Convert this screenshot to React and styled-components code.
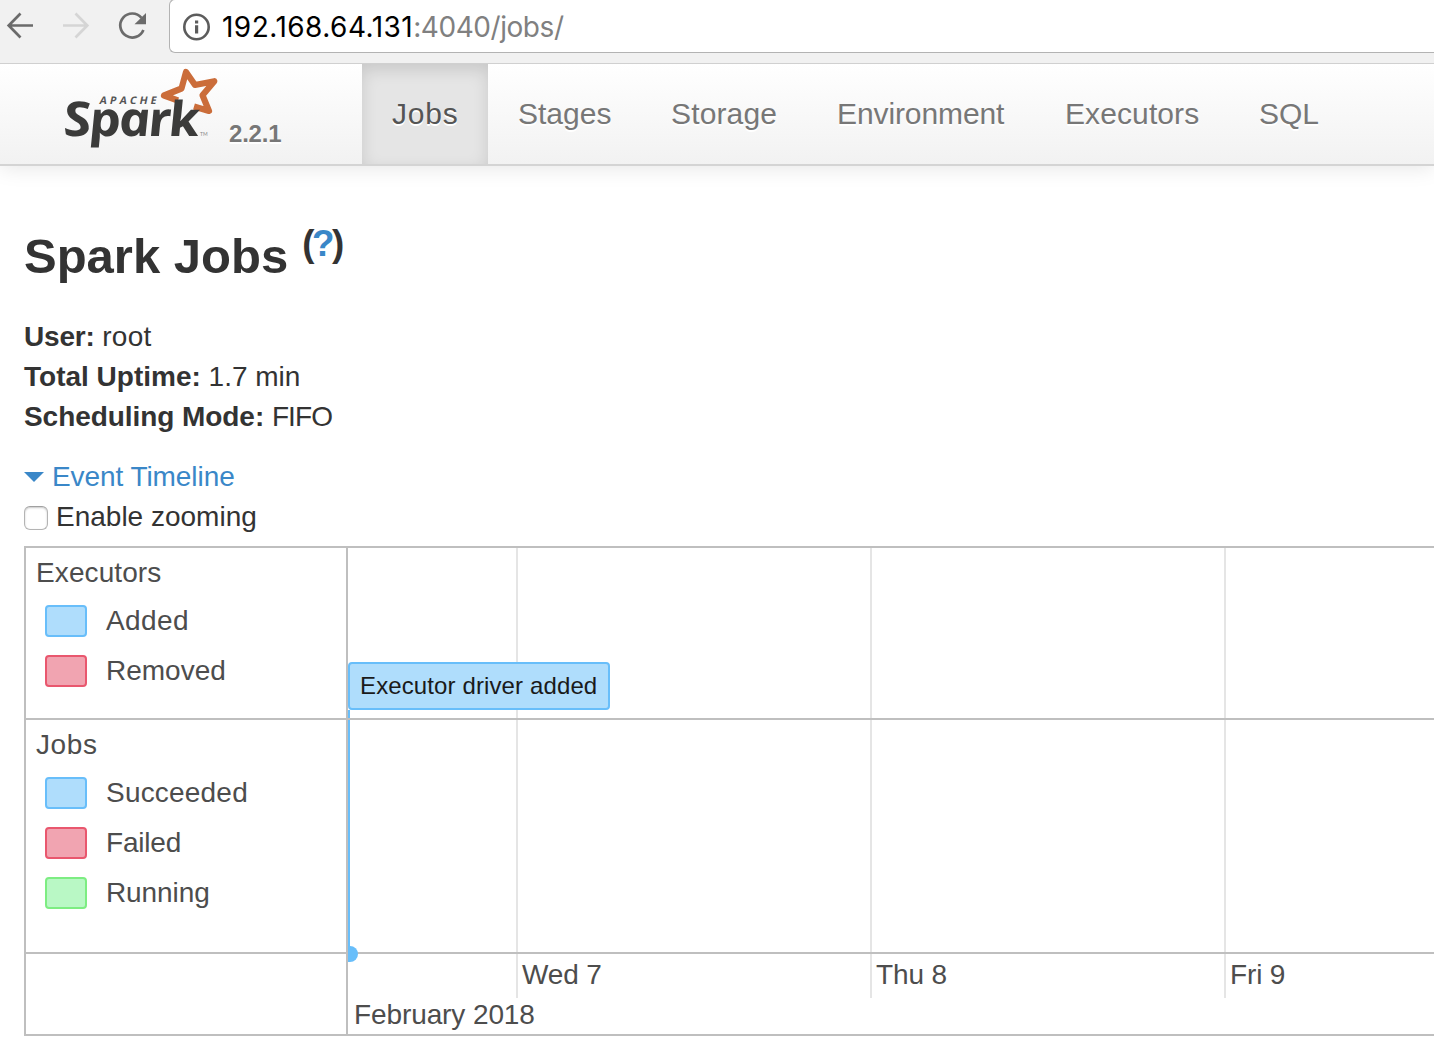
import React from "react";
import styled, { createGlobalStyle } from "styled-components";

const GlobalStyle = createGlobalStyle`
  *, *::before, *::after { box-sizing: border-box; }
  html, body { margin: 0; padding: 0; background: #fff; overflow: hidden; }
  body {
    font-family: "Liberation Sans", Arial, sans-serif;
    font-size: 28px;
    line-height: 40px;
    color: #333;
  }
`;

const Page = styled.div`
  width: 1434px;
  height: 1064px;
  overflow: hidden;
`;

const Toolbar = styled.header`
  position: relative;
  z-index: 1;
  display: flex;
  height: 64px;
  background: #f1f1f1;
  border-bottom: 1px solid #d0d0d0;
`;

const ToolbarButtons = styled.div`
  display: flex;
  width: 169px;
  height: 53px;
  flex: none;
`;

const AddressBar = styled.div`
  display: flex;
  align-items: center;
  flex: 1;
  height: 54px;
  margin-top: -1px;
  padding: 2px 0 0 12px;
  background: #fff;
  border: 1px solid #b3b3b3;
  border-right: 0;
  border-radius: 6px 0 0 6px;
  white-space: pre;
`;

const Url = styled.span`
  margin-left: 11px;
  font-family: Inter, "Liberation Sans", sans-serif;
  font-size: 28px;
  letter-spacing: ${(p) => p.$spacing || 0}px;
  color: #000;
`;

const UrlPath = styled.span`
  color: #808080;
  letter-spacing: ${(p) => p.$spacing || 0}px;
`;

const Navbar = styled.nav`
  display: flex;
  height: 102px;
  background: linear-gradient(to bottom, #ffffff, #f2f2f2);
  border-bottom: 2px solid #d4d4d4;
  box-shadow: 0 2px 20px rgba(0, 0, 0, 0.1);
`;

const Brand = styled.div`
  display: flex;
  width: 362px;
  flex: none;
`;

const Version = styled.span`
  padding-top: 50px;
  font-size: 24px;
  font-weight: bold;
  letter-spacing: ${(p) => p.$spacing || 0}px;
  color: #777;
  text-shadow: 0 2px 0 #fff;
`;

const NavItem = styled.a`
  flex: none;
  width: ${(p) => p.$width}px;
  height: 100px;
  padding: 30px 0 0 30px;
  font-size: 30px;
  letter-spacing: ${(p) => p.$spacing || 0}px;
  white-space: nowrap;
  color: ${(p) => (p.$active ? "#555" : "#777")};
  text-shadow: 0 2px 0 #fff;
  background: ${(p) => (p.$active ? "#e5e5e5" : "transparent")};
  box-shadow: ${(p) => (p.$active ? "inset 0 6px 16px rgba(0,0,0,0.125)" : "none")};
`;

const Content = styled.main`
  padding: 50px 0 0 24px;
`;

const Title = styled.h3`
  display: flex;
  margin: 0;
  height: 80px;
  font-size: 49px;
  line-height: 81px;
  white-space: nowrap;
`;

const HelpMark = styled.span`
  margin-left: 14px;
  font-size: 36.75px;
  line-height: 55px;
  letter-spacing: -2.5px;
`;

const Accent = styled.span`
  color: #3a87c8;
`;

const Summary = styled.ul`
  list-style: none;
  margin: 20px 0 20px;
  padding: 0;
`;

const SummaryRow = styled.li`
  height: 40px;
  padding-top: 1px;
  white-space: pre;
`;

const Text = styled.span`
  letter-spacing: ${(p) => p.$spacing || 0}px;
  font-weight: ${(p) => (p.$bold ? "bold" : "normal")};
`;

const TimelineToggle = styled.div`
  display: flex;
  align-items: center;
  gap: 8px;
  height: 40px;
  padding-top: 2px;
  color: #3a87c8;
`;

const Caret = styled.i`
  width: 0;
  height: 0;
  border: 10px solid transparent;
  border-top-color: #3a87c8;
  border-bottom: 0;
`;

const ZoomOption = styled.label`
  display: flex;
  align-items: center;
  gap: 8px;
  height: 40px;
  padding-top: 2px;
`;

const Checkbox = styled.span`
  width: 24px;
  height: 24px;
  margin-top: 2px;
  border: 1px solid #b4b4b4;
  border-top-color: #a0a0a0;
  border-radius: 6px;
  background: #fff;
  box-shadow: inset 0 1px 2px rgba(0, 0, 0, 0.22);
`;

const Timeline = styled.section`
  display: grid;
  grid-template-columns: 322px 1fr;
  grid-template-rows: 172px 234px 80px;
  margin-top: 10px;
  height: 490px;
  border: 2px solid #bfbfbf;
  border-right: 0;
  color: #4d4d4d;
`;

const GroupLabel = styled.div`
  padding: 5px 0 0 10px;
  border-right: 2px solid #bfbfbf;
  border-bottom: ${(p) => (p.$last ? "0" : "2px solid #bfbfbf")};
`;

const Legend = styled.div`
  display: flex;
  flex-direction: column;
  gap: 18px;
  padding: 12px 0 0 9px;
`;

const LegendRow = styled.div`
  display: flex;
  align-items: center;
  gap: 19px;
  height: 32px;
`;

const Swatch = styled.i`
  width: 42px;
  height: 32px;
  border-radius: 4px;
  border: 2px solid ${(p) => p.$edge};
  background: ${(p) => p.$fill};
`;

const Lane = styled.div`
  position: relative;
  display: grid;
  grid-template-columns: 168px 354px 354px 1fr;
  border-bottom: ${(p) => (p.$last ? "0" : "2px solid #bfbfbf")};
`;

const DayColumn = styled.div`
  height: ${(p) => (p.$axis ? "44px" : "100%")};
  padding-top: ${(p) => (p.$axis ? 1 : 0)}px;
  padding-left: ${(p) => (p.$first ? 0 : 4)}px;
  border-left: ${(p) => (p.$first ? "0" : "2px solid #e5e5e5")};
  letter-spacing: -0.15px;
  white-space: nowrap;
`;

const Month = styled.div`
  position: absolute;
  left: 6px;
  top: 41px;
  letter-spacing: -0.1px;
`;

const EventBox = styled.div`
  position: absolute;
  left: 0;
  top: 114px;
  width: 262px;
  height: 48px;
  padding: 2px 0 0 10px;
  border: 2px solid #68befa;
  border-radius: 4px;
  background: #afddfc;
  color: #1a1a1a;
  font-size: 24px;
  letter-spacing: ${(p) => p.$spacing || 0}px;
  white-space: nowrap;
`;

const EventStem = styled.div`
  position: absolute;
  left: 0;
  top: ${(p) => p.$top}px;
  width: 2px;
  height: ${(p) => p.$height}px;
  background: #68befa;
`;

const EventDot = styled.div`
  position: absolute;
  left: 0;
  bottom: -10px;
  width: 10px;
  height: 16px;
  border-radius: 0 8px 8px 0;
  background: #68befa;
  z-index: 1;
`;

const BLUE = { fill: "#afddfc", edge: "#68befa" };
const RED = { fill: "#f1a4b1", edge: "#e9576e" };
const GREEN = { fill: "#b9f8c5", edge: "#7ded82" };

function NavigationIcons() {
  return (
    <svg width="169" height="53" fill="none" strokeWidth="2.7">
      <path d="M33 25.5H9M20.5 13.5L8.7 25.5L20.5 37.5" stroke="#6b6b6b" />
      <path d="M63 25.5H87M75.5 13.5L87.3 25.5L75.5 37.5" stroke="#d5d5d5" />
      <path d="M141.5 17.8A12 12 0 1 0 143.4 30" stroke="#6b6b6b" />
      <path d="M146 13V24.2H134.5Z" fill="#6b6b6b" />
    </svg>
  );
}

function InfoIcon() {
  return (
    <svg width="29" height="28" viewBox="0 0 29 28">
      <circle cx="14.5" cy="14" r="12.2" fill="none" stroke="#5c5c5c" strokeWidth="2.6" />
      <path d="M13 12.3h3.2v8.2H13zM13 7.4h3.2v3H13z" fill="#5c5c5c" />
    </svg>
  );
}

const Wordmark = styled.text`
  font-family: "Open Sans", sans-serif;
  font-size: 48px;
  font-style: italic;
  font-weight: 700;
  letter-spacing: -2.4px;
  fill: #3b3b3a;
`;

function SparkLogo() {
  return (
    <svg width="229" height="100" viewBox="0 64 229 100">
      <path
        d="M178 100.5L164 95.5L181.5 88.5L186 72L195 85L214.3 81.2L202.5 95.2L209 111L194 106.5"
        fill="none"
        stroke="#cb6d3a"
        strokeWidth="6.2"
        strokeLinejoin="round"
      />
      <text
        transform="translate(99 104) skewX(-12)"
        fontFamily="Open Sans"
        fontWeight="700"
        fontSize="10.5"
        textLength="57"
        fill="#555"
      >
        APACHE
      </text>
      <Wordmark transform="translate(65 136) skewX(8) scale(1.13 1)">
        Spark
      </Wordmark>
      <text x="200" y="136" fontFamily="Lato" fontSize="5" fill="#888">
        TM
      </text>
    </svg>
  );
}

function LegendList({ items }) {
  return (
    <Legend>
      {items.map(([label, tone, spacing]) => (
        <LegendRow key={label}>
          <Swatch $fill={tone.fill} $edge={tone.edge} />
          <Text $spacing={spacing}>{label}</Text>
        </LegendRow>
      ))}
    </Legend>
  );
}

function Days({ axis }) {
  return (
    <>
      <DayColumn $first $axis={axis} />
      {["Wed 7", "Thu 8", "Fri 9"].map((day) => (
        <DayColumn key={day} $axis={axis}>
          {axis ? day : null}
        </DayColumn>
      ))}
    </>
  );
}

const TABS = [
  ["Jobs", 126, 0.8],
  ["Stages", 153, 0],
  ["Storage", 166, 0.15],
  ["Environment", 228, -0.1],
  ["Executors", 194, 0.1],
  ["SQL", 120, 0],
];

export default function App() {
  return (
    <Page>
      <GlobalStyle />
      <Toolbar>
        <ToolbarButtons>
          <NavigationIcons />
        </ToolbarButtons>
        <AddressBar>
          <InfoIcon />
          <Url $spacing={0.48}>
            192.168.64.131<UrlPath $spacing={-0.45}>:4040/jobs/</UrlPath>
          </Url>
        </AddressBar>
      </Toolbar>
      <Navbar>
        <Brand>
          <SparkLogo />
          <Version $spacing={-0.2}>2.2.1</Version>
        </Brand>
        {TABS.map(([label, width, spacing], i) => (
          <NavItem key={label} $width={width} $spacing={spacing} $active={i === 0}>
            {label}
          </NavItem>
        ))}
      </Navbar>
      <Content>
        <Title>
          Spark Jobs
          <HelpMark>
            (<Accent>?</Accent>)
          </HelpMark>
        </Title>
        <Summary>
          <SummaryRow>
            <Text $bold $spacing={-0.2}>User: </Text>
            <Text $spacing={0.3}>root</Text>
          </SummaryRow>
          <SummaryRow>
            <Text $bold>Total Uptime: </Text>
            <Text>1.7 min</Text>
          </SummaryRow>
          <SummaryRow>
            <Text $bold $spacing={-0.06}>Scheduling Mode: </Text>
            <Text $spacing={-0.9}>FIFO</Text>
          </SummaryRow>
        </Summary>
        <TimelineToggle>
          <Caret />
          <Text $spacing={-0.07}>Event Timeline</Text>
        </TimelineToggle>
        <ZoomOption>
          <Checkbox />
          <Text>Enable zooming</Text>
        </ZoomOption>
        <Timeline>
          <GroupLabel>
            <Text $spacing={0.1}>Executors</Text>
            <LegendList items={[["Added", BLUE, 0.4], ["Removed", RED, 0]]} />
          </GroupLabel>
          <Lane>
            <Days />
            <EventStem $top={162} $height={8} />
            <EventBox $spacing={0.12}>Executor driver added</EventBox>
          </Lane>
          <GroupLabel>
            <Text $spacing={0.6}>Jobs</Text>
            <LegendList items={[["Succeeded", BLUE, 0.2], ["Failed", RED, -0.2], ["Running", GREEN, -0.1]]} />
          </GroupLabel>
          <Lane>
            <Days />
            <EventStem $top={0} $height={232} />
            <EventDot />
          </Lane>
          <GroupLabel $last />
          <Lane $last>
            <Days axis />
            <Month>February 2018</Month>
          </Lane>
        </Timeline>
      </Content>
    </Page>
  );
}
